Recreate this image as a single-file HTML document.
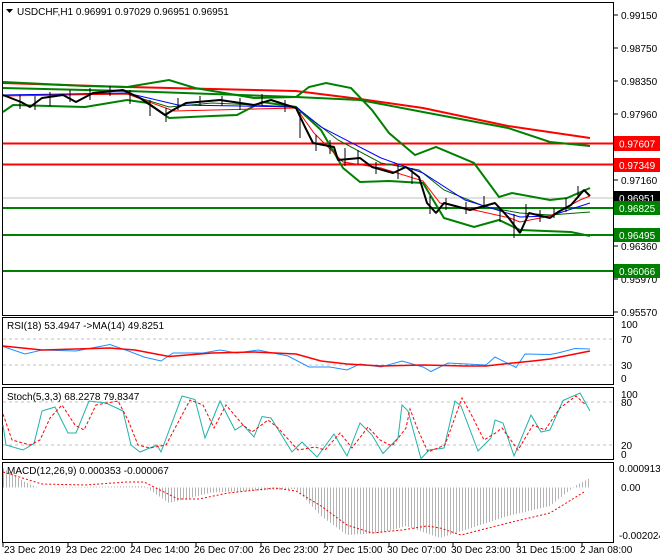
<!DOCTYPE html><html><head><meta charset="utf-8"><style>
body{margin:0;background:#fff;width:660px;height:560px;overflow:hidden}
svg{display:block;font-family:"Liberation Sans",sans-serif;font-size:10px}
</style></head><body>
<svg width="660" height="560" viewBox="0 0 660 560">
<defs><pattern id="hp" width="3" height="10" patternUnits="userSpaceOnUse"><rect x="0" y="0" width="1" height="10" fill="#b4b4b4"/></pattern></defs>
<g fill="none" stroke="#000" stroke-width="1">
<rect x="2.5" y="2.5" width="611" height="313"/>
<rect x="2.5" y="317.5" width="611" height="67"/>
<rect x="2.5" y="387.5" width="611" height="72"/>
<rect x="2.5" y="462.5" width="611" height="80"/>
</g>
<!-- main chart -->
<g fill="none">
<line x1="3" y1="198" x2="613" y2="198" stroke="#c0c0c0"/>
<line x1="3" y1="143.5" x2="613" y2="143.5" stroke="#f00" stroke-width="2"/>
<line x1="3" y1="164.5" x2="613" y2="164.5" stroke="#f00" stroke-width="2"/>
<line x1="3" y1="208" x2="613" y2="208" stroke="#008000" stroke-width="2"/>
<line x1="3" y1="235" x2="613" y2="235" stroke="#008000" stroke-width="2"/>
<line x1="3" y1="271" x2="613" y2="271" stroke="#008000" stroke-width="2"/>
<polyline stroke="#f00" stroke-width="2" points="3,83 127,87 296,91 360,99 423,108 508,126 590,138"/>
<polyline stroke="#008000" stroke-width="2" points="3,88 127,91 296,97 360,100 423,112 508,128 550,142 590,146"/>
<polyline stroke="#008000" stroke-width="2" points="3,82 85,86 127,87 169,80 195,88 254,98 296,97 309,87 326,83 351,88 372,110 389,133 415,155 436,147 474,163 499,197 512,193 550,200 567,198 590,188"/>
<polyline stroke="#008000" stroke-width="2" points="3,112 13,105 85,107 127,100 148,103 169,118 212,116 237,115 262,102 296,107 321,130 343,168 360,182 389,181 423,183 444,218 474,227 499,220 520,230 571,232 590,236"/>
<polyline stroke="#006400" stroke-width="1" points="3,95 127,94 169,107 212,103 296,107 338,140 381,163 419,170 444,190 486,207 520,213 550,215 590,212"/>
<polyline stroke="#00f" stroke-width="1" points="3,95 127,93 178,105 296,107 321,127 381,158 423,173 465,200 520,217 550,216 590,203"/>
<polyline stroke="#f00" stroke-width="1" points="3,96 127,94 174,111 296,108 314,133 343,162 381,168 423,181 440,203 465,208 510,218 520,222 550,216 580,200 590,196"/>
<polyline stroke="#000" stroke-width="2" stroke-linejoin="bevel" points="3,95 21,102 30,107 42,98 63,95 76,102 93,93 123,90 140,98 165,115 173,110 186,103 220,100 254,105 271,100 296,108 305,127 313,143 334,147 338,160 360,158 372,167 393,173 406,167 419,177 427,203 436,213 444,203 470,210 495,203 508,217 520,233 529,213 550,218 558,212 571,205 584,190 590,196"/>
<g stroke="#000" stroke-width="1">
<path d="M20,95v14M35,96v14M50,92v14M70,90v12M90,88v12M110,86v10M130,90v14M150,100v16M166,108v14M178,98v12M200,96v10M222,96v10M240,98v12M262,94v12M285,100v12M300,112v26M316,135v16M330,140v14M345,148v18M358,150v14M376,162v12M398,165v14M412,168v16M430,196v18M446,198v12M466,202v12M484,196v12M500,208v14M514,214v24M526,204v14M540,210v12M554,208v10M566,198v14M578,186v12"/>
</g>
</g>
<!-- RSI -->
<g fill="none">
<line x1="3" y1="339" x2="613" y2="339" stroke="#c0c0c0" stroke-dasharray="3,3"/>
<line x1="3" y1="365" x2="613" y2="365" stroke="#c0c0c0" stroke-dasharray="3,3"/>
<polyline stroke="#1e90ff" points="3,346.5 25,354 42,350 76,351 110,344.5 127,350.5 144,357 161,361 173,353 203,353 220,350 237,353 258,350 288,356 309,367 330,367 347,370 360,364 381,367 402,361 423,367 431,371.5 448,363 486,365 495,357 516,367.5 525,354 550,354.5 558,353 575,348.5 590,349"/>
<polyline stroke="#f00" stroke-width="1.5" points="3,346 42,350 110,348 135,350 169,356.5 212,353 254,352 296,354 321,361 347,364 381,366 423,365 465,366 486,366 508,363.5 533,361 550,359 590,351"/>
</g>
<!-- Stoch -->
<g fill="none">
<line x1="3" y1="402" x2="613" y2="402" stroke="#c0c0c0" stroke-dasharray="3,3"/>
<line x1="3" y1="445" x2="613" y2="445" stroke="#c0c0c0" stroke-dasharray="3,3"/>
<polyline stroke="#20b2aa" points="3,425 6,445 23,450 34,443.5 42,411 55,407 68,433 76,433 89,401 106,403 123,411 131,445 140,452 157,445 161,452 182,396 195,399.5 205,438 220,401 235,430 243,425 254,437 262,416.5 271,418 292,452 302,442 317,457 334,434 347,456 360,423 372,435 383,453.5 398,438 402,405 408,411 421,458.7 429,450 444,448 455,401 461,406 478,451 491,438 495,420 503,423 514,456 531,415 541,432 550,430 563,400.5 580,393 590,411"/>
<polyline stroke="#f00" stroke-dasharray="3,2" points="3,414 12,440 30,445 40,440 50,418 62,405 75,425 84,430 96,405 118,401 128,420 138,445 150,448 166,445 190,400 203,405 214,428 226,405 243,425 252,432 268,420 278,428 298,450 315,447 325,450 340,433 352,448 368,427 380,440 392,446 406,428 410,409 418,430 428,452 445,445 462,398 470,412 484,440 497,432 502,428 518,450 533,425 545,430 560,408 576,396 586,405"/>
</g>
<!-- MACD -->
<polygon fill="url(#hp)" points="3,468 25,482 38,487.5 144,486 169,503 190,498 211,492.5 296,489 321,516 347,535 381,533 406,526 440,538 465,530 508,516 550,506 575,486 590,478 590,487.5 3,487.5"/>
<polyline fill="none" stroke="#f00" stroke-dasharray="2,2" points="3,472 42,484 85,485 127,482 144,482 178,499 199,499 228,493 275,488 296,491 321,506 347,525 372,533 402,530 427,526 440,528 461,535 508,523 550,513 584,492"/>
<!-- texts -->
<g fill="#000">
<path d="M6,9h7l-3.5,4z"/>
<text x="17" y="15">USDCHF,H1  0.96991 0.97029 0.96951 0.96951</text>
<text x="7" y="329">RSI(18) 53.4947  -&gt;MA(14) 49.8251</text>
<text x="7" y="400">Stoch(5,3,3) 68.2278 79.8347</text>
<text x="7" y="474">MACD(12,26,9) 0.000353 -0.000067</text>
<g>
<text x="621" y="19">0.99150</text><text x="621" y="52">0.98750</text><text x="621" y="85">0.98350</text><text x="621" y="118">0.97960</text><text x="621" y="184">0.97160</text><text x="621" y="250">0.96360</text><text x="621" y="283">0.95970</text><text x="621" y="316">0.95570</text>
<text x="621" y="328">100</text><text x="621" y="343">70</text><text x="621" y="369">30</text><text x="621" y="382">0</text>
<text x="621" y="398">100</text><text x="621" y="406">80</text><text x="621" y="449">20</text><text x="621" y="458">0</text>
<text x="619" y="472">0.000913</text><text x="621" y="491">0.00</text><text x="619" y="539">-0.002024</text>
</g>
<g stroke="#000"><path d="M614,15h4M614,48h4M614,81h4M614,114h4M614,180h4M614,246h4M614,279h4M614,312h4"/></g>
<g font-size="10"><text x="4" y="553">23 Dec 2019</text><text x="66" y="553">23 Dec 22:00</text><text x="130" y="553">24 Dec 14:00</text><text x="194" y="553">26 Dec 07:00</text><text x="259" y="553">26 Dec 23:00</text><text x="323" y="553">27 Dec 15:00</text><text x="387" y="553">30 Dec 07:00</text><text x="451" y="553">30 Dec 23:00</text><text x="516" y="553">31 Dec 15:00</text><text x="580" y="553">2 Jan 08:00</text></g>
<g stroke="#000"><path d="M3,543v4M68,543v4M132,543v4M196,543v4M261,543v4M325,543v4M389,543v4M453,543v4M518,543v4M582,543v4"/></g>
</g>
<g>
<rect x="614" y="136" width="46" height="15" fill="#f00"/><text x="619" y="147.5" fill="#fff">0.97607</text>
<rect x="614" y="158" width="46" height="14" fill="#f00"/><text x="619" y="169" fill="#fff">0.97349</text>
<rect x="614" y="191" width="46" height="14" fill="#000"/><text x="619" y="202" fill="#fff">0.96951</text>
<rect x="614" y="201" width="46" height="14" fill="#008000"/><text x="619" y="212" fill="#fff">0.96825</text>
<rect x="614" y="228" width="46" height="14" fill="#008000"/><text x="619" y="239" fill="#fff">0.96495</text>
<rect x="614" y="264" width="46" height="14" fill="#008000"/><text x="619" y="275" fill="#fff">0.96066</text>
</g>
</svg></body></html>
